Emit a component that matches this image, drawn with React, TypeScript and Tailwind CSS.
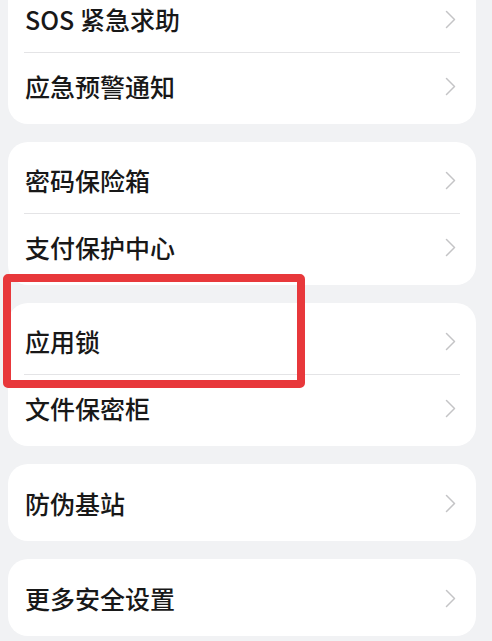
import React from 'react';

type Group = string[];

const GROUPS: Group[] = [
  ['SOS 紧急求助', '应急预警通知'],
  ['密码保险箱', '支付保护中心'],
  ['应用锁', '文件保密柜'],
  ['防伪基站'],
  ['更多安全设置'],
];

function Chevron() {
  return (
    <svg width="11" height="19" viewBox="0 0 11 19" fill="none" className="shrink-0">
      <path d="M1.5 1.5 L9.5 9.5 L1.5 17.5" stroke="#c4c4c6" strokeWidth="1.5" strokeLinecap="round" strokeLinejoin="round" />
    </svg>
  );
}

function Row({ label, pos }: { label: string; pos: 'first' | 'last' | 'single' }) {
  const pad = pos === 'first' ? 'h-[71px] pt-[6px]' : pos === 'last' ? 'h-[71px] pb-[4px]' : 'h-[77px] pt-[1px]';
  return (
    <div className={`flex items-center justify-between pl-[17px] pr-[20px] ${pad}`}>
      <span className="text-[25px] font-medium leading-none text-[#181818]">{label}</span>
      <Chevron />
    </div>
  );
}

export default function App() {
  return (
    <div
      className="relative h-[641px] w-full overflow-hidden bg-[#f1f2f4]"
      style={{ fontFamily: '"Noto Sans CJK SC", "Noto Sans", sans-serif' }}
    >
      <div className="mt-[-19px] flex flex-col gap-[18px] pl-[8px] pr-[16px]">
        {GROUPS.map((group, gi) => (
          <div key={gi} className="rounded-[20px] bg-white">
            {group.length === 1 ? (
              <Row label={group[0]} pos="single" />
            ) : (
              <>
                <Row label={group[0]} pos="first" />
                <div className="mx-[16px] h-px bg-[#e4e4e6]" />
                <Row label={group[1]} pos="last" />
              </>
            )}
          </div>
        ))}
      </div>
      {/* 标注框 */}
      <div className="pointer-events-none absolute left-[3px] top-[274px] h-[114px] w-[302px] rounded-[5px] border-[8px] border-[#e8383b]" />
    </div>
  );
}
